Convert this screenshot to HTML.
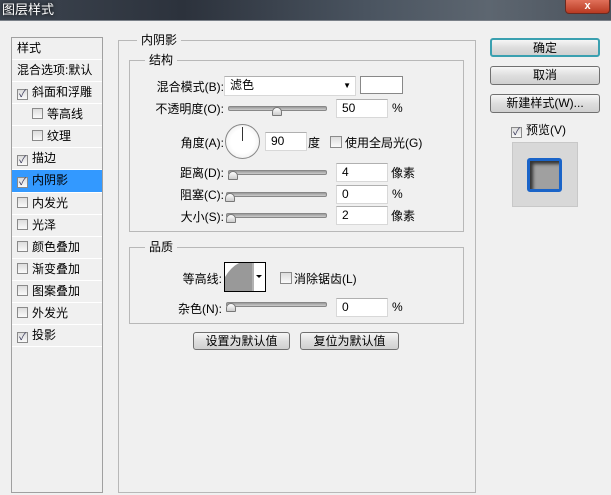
<!DOCTYPE html>
<html><head><meta charset="utf-8"><style>
*{box-sizing:border-box;margin:0;padding:0}
body{width:611px;height:495px;overflow:hidden;background:#f0f0f0;font-family:"Liberation Sans","Noto Sans CJK SC",sans-serif;font-size:12px;color:#000;position:relative}
.a{position:absolute}
.title{left:0;top:0;width:611px;height:21px;background:linear-gradient(90deg,#3d4550,#2c323c 30%,#4a5460 60%,#5d6670 80%,#4b535d);border-bottom:1px solid #7a8088}
.close{left:565px;top:0;width:45px;height:14px;background:linear-gradient(#e0705a,#b83a22);border:1px solid #6a2a20;border-top:none;border-radius:0 0 4px 4px;color:#fff;font-weight:bold;text-align:center;line-height:12px;font-size:11px}
.lp{left:11px;top:37px;width:92px;height:456px;border:1px solid #a0a0a0;background:#f0f0f0}
.row{position:absolute;left:0;width:90px;height:22px;border-bottom:1px solid #fff;line-height:21px;padding-left:5px;white-space:nowrap;overflow:hidden}
.cb{display:inline-block;width:11px;height:11px;border:1px solid #8a8a8a;background:linear-gradient(#ddd,#fafafa);vertical-align:-1px;margin-right:4px;font-size:10px;line-height:9px;text-align:center;color:#335}
.sel{background:#3399ff}
.grp{border:1px solid #b8b8b8}
.lg{background:#f0f0f0;padding:0 4px;line-height:14px}
.inp{background:#fff;border:1px solid #d8d8d8;border-top-color:#b0b0b0;height:19px;line-height:17px;padding-left:5px}
.sl{height:5px;border:1px solid #888;border-radius:2px;background:linear-gradient(#999,#ccc)}
.th{width:10px;height:9px;border:1px solid #777;border-radius:5px 5px 1px 1px;background:linear-gradient(#fff,#ccc)}
.btn{border:1px solid #707070;border-radius:3px;background:linear-gradient(#f6f6f6,#dedede 50%,#d0d0d0);text-align:center;line-height:16px}
.r{text-align:right}
</style></head><body>
<div class="a title"></div>
<div class="a" style="left:2px;top:1px;color:#fff;font-size:13px;line-height:18px;text-shadow:0 0 4px #000">图层样式</div>
<div class="a close">x</div>

<div class="a lp">
<div class="row" style="top:0">样式</div>
<div class="row" style="top:22px">混合选项:默认</div>
<div class="row" style="top:44px"><span class="cb">✓</span>斜面和浮雕</div>
<div class="row" style="top:66px;padding-left:20px"><span class="cb"></span>等高线</div>
<div class="row" style="top:88px;padding-left:20px"><span class="cb"></span>纹理</div>
<div class="row" style="top:110px"><span class="cb">✓</span>描边</div>
<div class="row sel" style="top:132px;height:23px"><span class="cb">✓</span>内阴影</div>
<div class="row" style="top:155px"><span class="cb"></span>内发光</div>
<div class="row" style="top:177px"><span class="cb"></span>光泽</div>
<div class="row" style="top:199px"><span class="cb"></span>颜色叠加</div>
<div class="row" style="top:221px"><span class="cb"></span>渐变叠加</div>
<div class="row" style="top:243px"><span class="cb"></span>图案叠加</div>
<div class="row" style="top:265px"><span class="cb"></span>外发光</div>
<div class="row" style="top:287px"><span class="cb">✓</span>投影</div>
</div>

<div class="a grp" style="left:118px;top:40px;width:358px;height:453px"></div>
<div class="a lg" style="left:137px;top:33px">内阴影</div>
<div class="a grp" style="left:129px;top:60px;width:335px;height:172px"></div>
<div class="a lg" style="left:145px;top:53px">结构</div>

<div class="a r" style="left:140px;top:78px;width:84px">混合模式(B):</div>
<div class="a inp" style="left:224px;top:76px;width:132px;height:20px">滤色<span style="position:absolute;right:4px;top:0;font-size:8px">▼</span></div>
<div class="a" style="left:360px;top:76px;width:43px;height:18px;border:1px solid #888;background:#fff"></div>

<div class="a r" style="left:140px;top:100px;width:84px">不透明度(O):</div>
<div class="a sl" style="left:228px;top:106px;width:99px"></div>
<div class="a th" style="left:272px;top:107px"></div>
<div class="a inp" style="left:336px;top:99px;width:52px">50</div>
<div class="a" style="left:392px;top:101px">%</div>

<div class="a r" style="left:150px;top:134px;width:74px">角度(A):</div>
<div class="a" style="left:225px;top:124px;width:35px;height:35px;border:1px solid #888;border-radius:50%;background:radial-gradient(#fff 50%,#e4e4e4)"></div>
<div class="a" style="left:242px;top:127px;width:1px;height:14px;background:#333"></div>
<div class="a inp" style="left:265px;top:132px;width:42px">90</div>
<div class="a" style="left:308px;top:134px">度</div>
<div class="a cb" style="left:330px;top:136px;width:12px;height:12px"></div>
<div class="a" style="left:345px;top:134px">使用全局光(G)</div>

<div class="a r" style="left:150px;top:164px;width:74px">距离(D):</div>
<div class="a sl" style="left:228px;top:170px;width:99px"></div>
<div class="a th" style="left:228px;top:171px"></div>
<div class="a inp" style="left:336px;top:163px;width:52px">4</div>
<div class="a" style="left:391px;top:164px">像素</div>

<div class="a r" style="left:150px;top:186px;width:74px">阻塞(C):</div>
<div class="a sl" style="left:226px;top:192px;width:101px"></div>
<div class="a th" style="left:225px;top:193px"></div>
<div class="a inp" style="left:336px;top:185px;width:52px">0</div>
<div class="a" style="left:392px;top:187px">%</div>

<div class="a r" style="left:150px;top:208px;width:74px">大小(S):</div>
<div class="a sl" style="left:226px;top:213px;width:101px"></div>
<div class="a th" style="left:226px;top:214px"></div>
<div class="a inp" style="left:336px;top:206px;width:52px">2</div>
<div class="a" style="left:391px;top:207px">像素</div>

<div class="a grp" style="left:129px;top:247px;width:335px;height:77px"></div>
<div class="a lg" style="left:145px;top:240px">品质</div>
<div class="a r" style="left:150px;top:270px;width:72px">等高线:</div>
<div class="a" style="left:224px;top:262px;width:42px;height:30px;border:1px solid #000;background:#fff;overflow:hidden">
<svg width="40" height="28"><path d="M0 28 L0 14 Q6 4 14 0 L27 0 L27 28Z" fill="#999"/><line x1="28" y1="0" x2="28" y2="28" stroke="#666"/><path d="M31 12h6l-3 3z" fill="#000"/></svg></div>
<div class="a cb" style="left:280px;top:272px;width:12px;height:12px"></div>
<div class="a" style="left:294px;top:270px">消除锯齿(L)</div>
<div class="a r" style="left:150px;top:300px;width:72px">杂色(N):</div>
<div class="a sl" style="left:226px;top:302px;width:101px"></div>
<div class="a th" style="left:226px;top:303px"></div>
<div class="a inp" style="left:336px;top:298px;width:52px">0</div>
<div class="a" style="left:392px;top:300px">%</div>

<div class="a btn" style="left:193px;top:332px;width:97px;height:18px">设置为默认值</div>
<div class="a btn" style="left:300px;top:332px;width:99px;height:18px">复位为默认值</div>

<div class="a btn" style="left:490px;top:38px;width:110px;height:19px;border:2px solid #3aa0b0">确定</div>
<div class="a btn" style="left:490px;top:66px;width:110px;height:19px">取消</div>
<div class="a btn" style="left:490px;top:94px;width:110px;height:19px">新建样式(W)...</div>
<div class="a" style="left:511px;top:121px"><span class="cb">✓</span>预览(V)</div>
<div class="a" style="left:512px;top:142px;width:66px;height:65px;background:#d8d8d8;border:1px solid #c8c8c8"></div>
<div class="a" style="left:527px;top:158px;width:35px;height:34px;border:3px solid #1a64c8;border-radius:3px;background:#a0a0a0;box-shadow:inset 3px 3px 3px #333"></div>
</body></html>
